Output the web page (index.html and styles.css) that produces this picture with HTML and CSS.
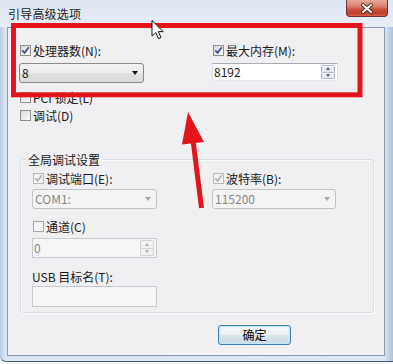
FILE: index.html
```html
<!DOCTYPE html>
<html lang="zh-CN">

<head>
    <meta charset="UTF-8">
    <title>引导高级选项</title>
    <link rel="stylesheet" href="styles.css">
</head>

<body>

    <div class="window">
        <div class="titlebar">
            <span class="title">引导高级选项</span>
            <div class="close-btn">
                <svg width="14" height="11" viewBox="0 0 14 11">
                    <path d="M3 2 L11 9 M11 2 L3 9" stroke="#5a2620" stroke-width="4" stroke-linecap="round" />
                    <path d="M3 2 L11 9 M11 2 L3 9" stroke="#ffffff" stroke-width="2.2" stroke-linecap="round" />
                </svg>
            </div>
        </div>

        <div class="client">
            <!-- CPU count / max memory -->
            <div class="top-row">
                <div class="col">
                    <div class="check">
                        <span class="box"><svg width="9" height="9" viewBox="0 0 9 9"><path d="M1.3 4.3 L3.6 6.9 L7.8 1.2" class="tick" /></svg></span>
                        处理器数(N):
                    </div>
                    <div class="combo"><span>8</span><span class="caret"></span></div>
                </div>
                <div class="col wide">
                    <div class="check">
                        <span class="box"><svg width="9" height="9" viewBox="0 0 9 9"><path d="M1.3 4.3 L3.6 6.9 L7.8 1.2" class="tick" /></svg></span>
                        最大内存(M):
                    </div>
                    <div class="spin">
                        <span class="spin-value">8192</span>
                        <span class="spin-btns"><span class="spin-up"></span><span class="spin-down"></span></span>
                    </div>
                </div>
            </div>

            <div class="check pci"><span class="box"></span>PCI 锁定(L)</div>
            <div class="check debug"><span class="box"></span>调试(D)</div>

            <!-- global debug settings -->
            <div class="group">
                <div class="group-title">全局调试设置</div>
                <div class="group-row first">
                    <div class="check">
                        <span class="box off"><svg width="9" height="9" viewBox="0 0 9 9"><path d="M1.3 4.3 L3.6 6.9 L7.8 1.2" class="tick" /></svg></span>
                        调试端口(E):
                    </div>
                    <div class="check">
                        <span class="box off"><svg width="9" height="9" viewBox="0 0 9 9"><path d="M1.3 4.3 L3.6 6.9 L7.8 1.2" class="tick" /></svg></span>
                        波特率(B):
                    </div>
                </div>
                <div class="group-row combos">
                    <div class="combo off"><span>COM1:</span><span class="caret"></span></div>
                    <div class="combo off"><span>115200</span><span class="caret"></span></div>
                </div>
                <div class="check channel"><span class="box off-empty"></span>通道(C)</div>
                <div class="spin off">
                    <span class="spin-value">0</span>
                    <span class="spin-btns"><span class="spin-up"></span><span class="spin-down"></span></span>
                </div>
                <div class="field-label">USB 目标名(T):</div>
                <div class="textbox off"></div>
            </div>

            <div class="footer">
                <button class="btn">确定</button>
            </div>
        </div>
    </div>

    <!-- annotation drawn over the screenshot -->
    <svg class="overlay" width="393" height="364" viewBox="0 0 393 364">
        <rect x="13.5" y="25.5" width="346.5" height="69.3" fill="none" stroke="#e3141b" stroke-width="5" />
        <line x1="193" y1="140" x2="201.5" y2="208" stroke="#e3141b" stroke-width="5" />
        <polygon points="188,112 182,144.5 204,142" fill="#e3141b" />
        <path d="M152 20.5 V36 L155.8 32.6 L158.6 38.6 L161 37.5 L158.3 31.6 H163.2 Z" fill="#ffffff" stroke="#111111" stroke-width="1" stroke-linejoin="round" />
    </svg>

</body>

</html>
```

FILE: styles.css
```css
/* Global */
* {
    box-sizing: border-box;
}

body {
    margin: 0;
    width: 393px;
    height: 364px;
    overflow: hidden;
    position: relative;
    background-color: #ffffff;
    font-family: "Noto Sans CJK SC", "Noto Sans", sans-serif;
    font-size: 12px;
    color: #1a1a1a;
}

/* Window frame */
.window {
    width: 393px;
    height: 362px;
    display: flex;
    flex-direction: column;
    background: linear-gradient(to right, #b9cce4, #d9e4f1 5px, #dce6f2 calc(100% - 9px), #aec3dd);
    border-bottom: 1px solid #4b5c74;
    border-bottom-left-radius: 6px;
}

.titlebar {
    height: 27px;
    flex: none;
    display: flex;
    justify-content: space-between;
    align-items: flex-start;
    padding-left: 8px;
    background: linear-gradient(#dfe7f2, #e7edf5);
}

.title {
    margin-top: 6px;
    line-height: 16px;
    font-size: 12px;
    letter-spacing: 0.2px;
    color: #1c1c1c;
}

.close-btn {
    width: 42px;
    height: 17px;
    margin-right: 5px;
    border: 1px solid #6e332c;
    border-top: none;
    border-radius: 0 0 4px 4px;
    background: linear-gradient(#e8a898 0%, #dc8171 40%, #c94c38 60%, #c2402c 85%, #d8664c 100%);
    display: flex;
    align-items: center;
    justify-content: center;
}

/* Client area */
.client {
    flex: 1;
    margin: 0 8px 5px 7px;
    border: 1px solid #8a9bb3;
    background-color: #f0eff2;
    padding: 15px 0 0 11px;
    display: flex;
    flex-direction: column;
    align-items: flex-start;
}

.top-row {
    display: flex;
    gap: 68px;
}

.col {
    width: 125px;
    display: flex;
    flex-direction: column;
    gap: 5px;
}

.col.wide {
    width: 126px;
}

/* Checkboxes */
.check {
    display: flex;
    align-items: center;
    gap: 2px;
    height: 15px;
    line-height: 15px;
    padding-left: 1px;
    white-space: nowrap;
}

.box {
    width: 11px;
    height: 11px;
    flex: none;
    border: 1px solid #8e8f8f;
    background: linear-gradient(135deg, #d8d8d8, #fbfbfb);
    display: flex;
    align-items: center;
    justify-content: center;
}

.box svg {
    display: block;
}

.tick {
    fill: none;
    stroke: #3f5690;
    stroke-width: 1.8;
}

.box.off,
.box.off-empty {
    border-color: #b9b9b9;
    background: #f4f4f4;
}

.box.off-empty {
    border-color: #a9a9a9;
}

.box.off .tick {
    stroke: #b2b2b2;
}

.pci {
    margin-top: 7px;
}

.debug {
    margin-top: 3px;
}

/* Combo boxes */
.combo {
    width: 125px;
    height: 20px;
    border: 1px solid #8a8a8a;
    border-radius: 3px;
    background: linear-gradient(#f3f3f3 0%, #ececec 50%, #e2e2e2 51%, #d9d9d9 100%);
    display: flex;
    align-items: center;
    justify-content: space-between;
    padding: 0 5px 0 2px;
    line-height: 18px;
}

.caret {
    width: 0;
    height: 0;
    border-left: 3.5px solid transparent;
    border-right: 3.5px solid transparent;
    border-top: 4px solid #111;
}

.combo.off {
    border-color: #c3c3c3;
    background: #f4f4f4;
    color: #8a8a8a;
}

.combo.off .caret {
    border-top-color: #a8a8a8;
}

/* Spin boxes */
.spin {
    width: 126px;
    height: 18px;
    border: 1px solid #abadb3;
    border-left-color: #dbdfe6;
    border-right-color: #dbdfe6;
    border-bottom-color: #e3e9ef;
    background-color: #ffffff;
    display: flex;
    align-items: center;
    justify-content: space-between;
    padding: 0 2px 0 1px;
    line-height: 16px;
}

.spin-btns {
    width: 14px;
    height: 14px;
    display: flex;
    flex-direction: column;
    gap: 0;
}

.spin-up,
.spin-down {
    flex: 1;
    border: 1px solid #b3bcc6;
    background: linear-gradient(#f6f8fa, #dde3ea);
    display: flex;
    align-items: center;
    justify-content: center;
}

.spin-up {
    border-radius: 2px 2px 0 0;
}

.spin-down {
    border-radius: 0 0 2px 2px;
    border-top: none;
}

.spin-up::after {
    content: "";
    border-left: 2.5px solid transparent;
    border-right: 2.5px solid transparent;
    border-bottom: 3px solid #4d6185;
}

.spin-down::after {
    content: "";
    border-left: 2.5px solid transparent;
    border-right: 2.5px solid transparent;
    border-top: 3px solid #4d6185;
}

.spin.off {
    width: 125px;
    height: 20px;
    border-color: #c6cacf;
    background-color: #f6f6f6;
    color: #8a8a8a;
    margin-top: 4px;
}

.spin.off .spin-btns {
    height: 16px;
}

.spin.off .spin-up,
.spin.off .spin-down {
    border-color: #d0d4d8;
    background: #f2f2f2;
}

.spin.off .spin-up::after {
    border-bottom-color: #b0b0b0;
}

.spin.off .spin-down::after {
    border-top-color: #b0b0b0;
}

/* Group box */
.group {
    width: 354px;
    margin: 36px 0 0 1px;
    border: 1px solid #d5dfe5;
    border-radius: 3px;
    box-shadow: inset 1px 1px 0 #fbfbfc, 1px 1px 0 #fbfbfc;
    padding: 0 0 5px 11px;
    display: flex;
    flex-direction: column;
    align-items: flex-start;
}

.group-title {
    margin: -8px 0 0 -6px;
    padding: 0 2px;
    line-height: 15px;
    background-color: #f0eff2;
}

.group-row {
    display: flex;
    gap: 55px;
}

.group-row > * {
    width: 125px;
}

.group-row.first {
    margin-top: 4px;
}

.group-row.combos {
    margin-top: 3px;
}

.group-row.combos .combo + .combo {
    width: 124px;
}

.channel {
    margin-top: 10px;
}

.field-label {
    margin-top: 11px;
    line-height: 15px;
    white-space: nowrap;
}

.textbox {
    width: 125px;
    height: 21px;
    margin-top: 2px;
    border: 1px solid #c6cacf;
    background-color: #f6f6f6;
}

/* Button */
.footer {
    margin-top: 12px;
    padding-left: 199px;
}

.btn {
    width: 73px;
    height: 20px;
    padding: 0;
    border: 1px solid #3c7fb1;
    border-radius: 3px;
    background: linear-gradient(#f4f7f9 0%, #eaf0f4 50%, #d9e3ea 51%, #cddae3 100%);
    box-shadow: inset 0 0 0 1px #c4e5f6;
    font-family: "Noto Sans CJK SC", sans-serif;
    font-size: 12px;
    line-height: 18px;
    color: #000;
}

/* Annotation layer */
.overlay {
    position: absolute;
    top: 0;
    left: 0;
    pointer-events: none;
}
```
